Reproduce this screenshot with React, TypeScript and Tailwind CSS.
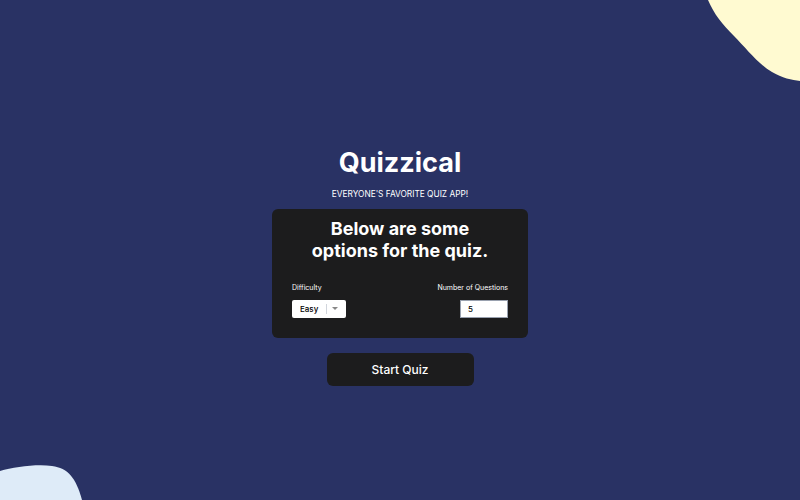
export default function App() {
  return (
    <div className="relative w-[800px] h-[500px] overflow-hidden bg-[#293264] text-white antialiased font-['Inter','Noto_Sans',sans-serif]">
      <svg className="absolute top-0 right-0" width="92" height="82" viewBox="0 0 92 82">
        <path d="M0 0 C6 14 14 24 26 36 C38 48 50 64 64 72 C74 78 84 80 92 81 L92 0 Z" fill="#FFFAD1" />
      </svg>
      <svg className="absolute bottom-0 left-0" width="84" height="36" viewBox="0 0 84 36">
        <path d="M0 7 C14 3 36 0 52 2 C68 4 76 14 82 36 L0 36 Z" fill="#DEEBF8" />
      </svg>

      <div className="relative flex flex-col items-center pt-[145px]">
        <h1 className="text-[27px] leading-[36px] font-bold">Quizzical</h1>
        <p className="mt-[7px] text-[8.3px] leading-[12px] uppercase">Everyone's favorite quiz app!</p>

        <div className="mt-[9px] w-[256px] h-[129px] rounded-[6px] bg-[#1c1c1d] px-[20px] pt-[9px]">
          <h2 className="text-center text-[18px] leading-[22px] font-bold">
            Below are some
            <br />
            options for the quiz.
          </h2>
          <div className="mt-[21px] flex justify-between">
            <div className="flex flex-col">
              <span className="text-[7px] leading-[9px]">Difficulty</span>
              <div className="mt-[8px] flex items-center w-[54px] h-[18px] bg-white rounded-[2px] text-black text-[8px] font-medium">
                <span className="pl-[8px] w-[34px]">Easy</span>
                <span className="w-px h-[10px] bg-gray-300" />
                <svg className="ml-[5px]" width="6" height="4" viewBox="0 0 6 4">
                  <path d="M0 0 L6 0 L3 3 Z" fill="#888" />
                </svg>
              </div>
            </div>
            <div className="flex flex-col items-end">
              <span className="text-[7px] leading-[9px]">Number of Questions</span>
              <div className="mt-[8px] flex items-center w-[48px] h-[18px] bg-white border border-gray-400 text-black text-[8px] font-medium pl-[7px]">
                5
              </div>
            </div>
          </div>
        </div>

        <button className="mt-[15px] w-[147px] h-[33px] rounded-[6px] bg-[#1c1c1d] text-[12px] font-medium">
          Start Quiz
        </button>
      </div>
    </div>
  );
}
